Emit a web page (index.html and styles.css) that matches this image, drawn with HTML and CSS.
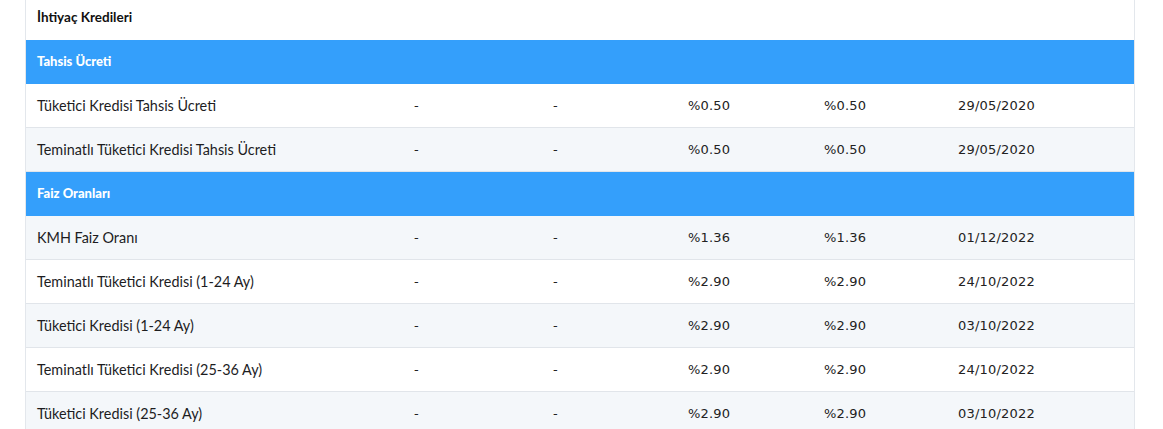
FILE: index.html
```html
<!DOCTYPE html>
<html lang="tr">
<head>
    <meta charset="UTF-8">
    <meta name="viewport" content="width=device-width, initial-scale=1.0">
    <title>İhtiyaç Kredileri</title>
    <link rel="stylesheet" href="styles.css">
</head>
<body>
    <div class="rates">
        <div class="rates-title">İhtiyaç Kredileri</div>
        <table class="rates-table">
            <colgroup>
                <col class="col-name">
                <col class="col-a">
                <col class="col-b">
                <col class="col-c">
                <col class="col-d">
                <col>
            </colgroup>
            <tbody>
                <tr class="group">
                    <td colspan="6">Tahsis Ücreti</td>
                </tr>
                <tr>
                    <td>Tüketici Kredisi Tahsis Ücreti</td>
                    <td class="num">-</td>
                    <td class="num">-</td>
                    <td class="num">%0.50</td>
                    <td class="num">%0.50</td>
                    <td class="num">29/05/2020</td>
                </tr>
                <tr class="alt">
                    <td>Teminatlı Tüketici Kredisi Tahsis Ücreti</td>
                    <td class="num">-</td>
                    <td class="num">-</td>
                    <td class="num">%0.50</td>
                    <td class="num">%0.50</td>
                    <td class="num">29/05/2020</td>
                </tr>
                <tr class="group">
                    <td colspan="6">Faiz Oranları</td>
                </tr>
                <tr class="alt">
                    <td>KMH Faiz Oranı</td>
                    <td class="num">-</td>
                    <td class="num">-</td>
                    <td class="num">%1.36</td>
                    <td class="num">%1.36</td>
                    <td class="num">01/12/2022</td>
                </tr>
                <tr>
                    <td>Teminatlı Tüketici Kredisi (1-24 Ay)</td>
                    <td class="num">-</td>
                    <td class="num">-</td>
                    <td class="num">%2.90</td>
                    <td class="num">%2.90</td>
                    <td class="num">24/10/2022</td>
                </tr>
                <tr class="alt">
                    <td>Tüketici Kredisi (1-24 Ay)</td>
                    <td class="num">-</td>
                    <td class="num">-</td>
                    <td class="num">%2.90</td>
                    <td class="num">%2.90</td>
                    <td class="num">03/10/2022</td>
                </tr>
                <tr>
                    <td>Teminatlı Tüketici Kredisi (25-36 Ay)</td>
                    <td class="num">-</td>
                    <td class="num">-</td>
                    <td class="num">%2.90</td>
                    <td class="num">%2.90</td>
                    <td class="num">24/10/2022</td>
                </tr>
                <tr class="alt">
                    <td>Tüketici Kredisi (25-36 Ay)</td>
                    <td class="num">-</td>
                    <td class="num">-</td>
                    <td class="num">%2.90</td>
                    <td class="num">%2.90</td>
                    <td class="num">03/10/2022</td>
                </tr>
            </tbody>
        </table>
    </div>
</body>
</html>
```

FILE: styles.css
```css
body {
    margin: 0;
    padding: 0;
    background-color: #fff;
    font-family: Lato, "Noto Sans", sans-serif;
    color: #1d1d1f;
}
.rates {
    margin-left: 25px;
    width: 1108px;
    border-left: 1px solid #e3e7ec;
    border-right: 1px solid #e3e7ec;
}
.rates-title {
    height: 40px;
    line-height: 34px;
    padding-left: 11px;
    font-size: 13.5px;
    font-weight: bold;
    color: #111;
}
.rates-table {
    width: 100%;
    border-collapse: collapse;
    table-layout: fixed;
}
.col-name { width: 377px; }
.col-a { width: 139px; }
.col-b { width: 135px; }
.col-c { width: 136px; }
.col-d { width: 134px; }
.rates-table td {
    height: 43px;
    padding: 0 0 0 11px;
    border-bottom: 1px solid #e1e5ea;
    font-size: 14.4px;
    white-space: nowrap;
    background-color: #fff;
}
.rates-table tr.alt td {
    background-color: #f4f7fa;
}
.rates-table td.num {
    font-family: "DejaVu Sans", Verdana, sans-serif;
    font-size: 13px;
    letter-spacing: 0.2px;
    color: #222;
}
.rates-table tr.group td {
    background-color: #349ffb;
    border-bottom-color: #349ffb;
    color: #fff;
    font-size: 13px;
    font-weight: 900;
    padding-bottom: 2px;
    height: 41px;
}
```
